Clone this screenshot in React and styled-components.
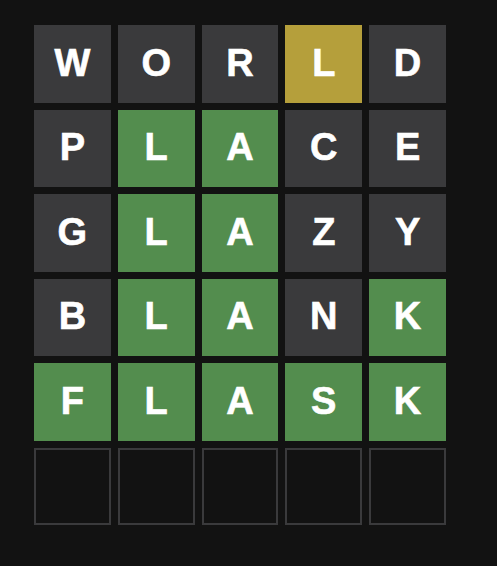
import React from 'react';
import styled, { createGlobalStyle } from 'styled-components';

const GlobalStyle = createGlobalStyle`
    html, body {
        margin: 0;
        padding: 0;
        background: #121212;
    }
`

const Page = styled.div`
    min-height: 566px;
    padding: 25px 0 0 34px;
    box-sizing: border-box;
    background: #121212;
    font-family: 'Liberation Sans', Arial, sans-serif;
`

const Board = styled.div`
    display: grid;
    grid-template-columns: repeat(5, 1fr);
    grid-template-rows: repeat(6, 1fr);
    gap: 7px;
    width: 412px;
    height: 500px;
`

const colors = {
    absent: '#3a3a3c',
    correct: '#538d4e',
    present: '#b59f3b',
};

const Tile = styled.div`
    display: flex;
    align-items: center;
    justify-content: center;
    box-sizing: border-box;
    padding-bottom: 2px;
    background: ${props => props.state ? colors[props.state] : 'transparent'};
    border: ${props => props.state ? 'none' : '2px solid #3a3a3c'};
    color: #ffffff;
    font-size: 38px;
    font-weight: 700;
    -webkit-text-stroke: 0.6px #ffffff;
    text-transform: uppercase;
    line-height: 1;
`

// a = absent, c = correct, p = present
const guesses = [
    ['world', 'aaapa'],
    ['place', 'accaa'],
    ['glazy', 'accaa'],
    ['blank', 'accac'],
    ['flask', 'ccccc'],
];

const codeMap = { a: 'absent', c: 'correct', p: 'present' };

const App = () => {
    const rows = [...guesses];
    while (rows.length < 6) rows.push(['     ', null]);

    return (
        <Page>
            <GlobalStyle />
            <Board>
                {rows.map(([word, result], r) =>
                    word.split('').map((ch, i) => (
                        <Tile key={`${r}-${i}`} state={result ? codeMap[result[i]] : null}>
                            {ch.trim()}
                        </Tile>
                    ))
                )}
            </Board>
        </Page>
    )
}

export default App;
